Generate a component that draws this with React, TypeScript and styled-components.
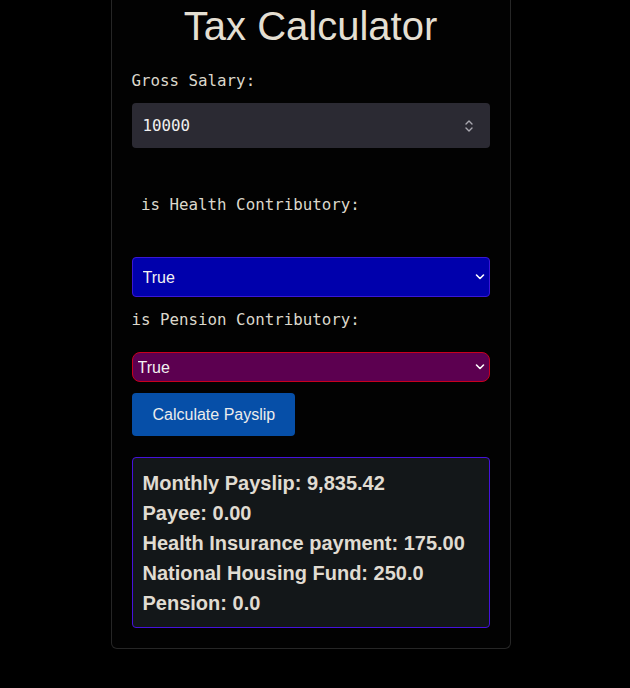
import React from "react";
import styled, { createGlobalStyle } from "styled-components";

const Global = createGlobalStyle`
  html, body { margin: 0; padding: 0; background: #000; }
  body { font-family: "Liberation Sans", Arial, sans-serif; color: #dedad2; }
  * { box-sizing: border-box; }
`;

const Page = styled.div`
  display: flex;
  justify-content: center;
  padding-right: 9px;
  min-height: 688px;
`;

const Card = styled.div`
  width: 400px;
  margin-top: -12px;
  align-self: flex-start;
  border: 1px solid #262626;
  border-top: none;
  border-radius: 0 0 6px 6px;
  background: #020202;
  padding: 0 20px 20px;
  display: flex;
  flex-direction: column;
`;

const Title = styled.h1`
  margin: 15px 0 0;
  font-family: "Liberation Sans", Arial, sans-serif;
  font-weight: 400;
  font-size: 40px;
  line-height: 46px;
  text-align: center;
  color: #e4dfd2;
`;

const Label = styled.label<{ $top: number }>`
  display: block;
  margin-top: ${(p) => p.$top}px;
  font-family: "DejaVu Sans Mono", monospace;
  font-size: 15.8px;
  line-height: 20px;
  color: #dcd8cc;
  white-space: pre;
`;

const Control = styled.div<{ $top: number }>`
  position: relative;
  margin-top: ${(p) => p.$top}px;
`;

const NumberInput = styled.input`
  display: block;
  width: 100%;
  height: 45px;
  border: none;
  border-radius: 4px;
  background: #2b2a33;
  color: #f0f0f0;
  font-family: "DejaVu Sans Mono", monospace;
  font-size: 15.8px;
  padding: 0 11px;
  outline: none;
  appearance: textfield;
  -moz-appearance: textfield;
  &::-webkit-inner-spin-button,
  &::-webkit-outer-spin-button {
    -webkit-appearance: none;
    margin: 0;
  }
`;

const Select = styled.select<{ $bg: string; $border: string; $h: number; $radius: number; $pad: number }>`
  display: block;
  width: 100%;
  height: ${(p) => p.$h}px;
  appearance: none;
  -webkit-appearance: none;
  background: ${(p) => p.$bg};
  border: 1px solid ${(p) => p.$border};
  border-radius: ${(p) => p.$radius}px;
  color: #f2f2f2;
  font-family: "Liberation Sans", Arial, sans-serif;
  font-size: 16px;
  padding: 0 ${(p) => p.$pad}px;
  outline: none;
`;

const Overlay = styled.span`
  position: absolute;
  top: 50%;
  transform: translateY(-50%);
  pointer-events: none;
  display: flex;
`;

const Button = styled.button`
  align-self: flex-start;
  margin-top: 11px;
  height: 43px;
  padding: 0 20px 0 21px;
  border: none;
  border-radius: 4px;
  background: #064fa8;
  color: #ececec;
  font-family: "Liberation Sans", Arial, sans-serif;
  font-size: 16px;
`;

const Result = styled.div`
  margin-top: 21px;
  background: #131719;
  border: 1px solid #4512dc;
  border-radius: 4px;
  padding: 10px 10px 9px;
`;

const Line = styled.div`
  font-family: "Liberation Sans", Arial, sans-serif;
  font-weight: 700;
  font-size: 20px;
  line-height: 30px;
  color: #e0dcd2;
`;

const Chevron = () => (
  <svg width="10" height="7" viewBox="0 0 10 7" fill="none">
    <path d="M1.5 1.5 L5 5 L8.5 1.5" stroke="#fff" strokeWidth="1.6" strokeLinecap="round" strokeLinejoin="round" />
  </svg>
);

const Spinner = () => (
  <svg width="10" height="16" viewBox="0 0 10 16" fill="none">
    <path d="M2 6 L5 3 L8 6" stroke="#a9a8b0" strokeWidth="1.4" strokeLinecap="round" strokeLinejoin="round" />
    <path d="M2 10 L5 13 L8 10" stroke="#a9a8b0" strokeWidth="1.4" strokeLinecap="round" strokeLinejoin="round" />
  </svg>
);

const results = [
  "Monthly Payslip: 9,835.42",
  "Payee: 0.00",
  "Health Insurance payment: 175.00",
  "National Housing Fund: 250.0",
  "Pension: 0.0",
];

export default function App() {
  return (
    <>
      <Global />
      <Page>
        <Card>
          <Title>Tax Calculator</Title>
          <Label $top={22}>Gross Salary:</Label>
          <Control $top={12}>
            <NumberInput type="number" defaultValue={10000} />
            <Overlay style={{ right: 16 }}>
              <Spinner />
            </Overlay>
          </Control>
          <Label $top={47}>{" is Health Contributory:"}</Label>
          <Control $top={42}>
            <Select $bg="#0000ac" $border="#3a16d6" $h={40} $radius={4} $pad={10} defaultValue="true">
              <option value="true">True</option>
              <option value="false">False</option>
            </Select>
            <Overlay style={{ right: 5 }}>
              <Chevron />
            </Overlay>
          </Control>
          <Label $top={13}>is Pension Contributory:</Label>
          <Control $top={22}>
            <Select $bg="#5c0050" $border="#c8001e" $h={30} $radius={8} $pad={5} defaultValue="true">
              <option value="true">True</option>
              <option value="false">False</option>
            </Select>
            <Overlay style={{ right: 5 }}>
              <Chevron />
            </Overlay>
          </Control>
          <Button>Calculate Payslip</Button>
          <Result>
            {results.map((r) => (
              <Line key={r}>{r}</Line>
            ))}
          </Result>
        </Card>
      </Page>
    </>
  );
}
